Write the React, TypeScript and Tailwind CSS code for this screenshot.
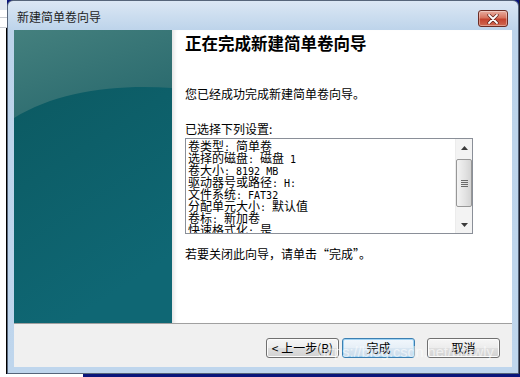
import React from "react";

const settings = [
  "卷类型: 简单卷",
  "选择的磁盘: 磁盘 1",
  "卷大小: 8192 MB",
  "驱动器号或路径: H:",
  "文件系统: FAT32",
  "分配单元大小: 默认值",
  "卷标: 新加卷",
  "快速格式化: 是",
];

const btn =
  "h-[20px] w-[73px] rounded-[3px] border border-[#707070] bg-[linear-gradient(to_bottom,#f6f6f6_0%,#ececec_50%,#dfdfdf_51%,#d2d2d2_100%)] shadow-[inset_0_0_0_1px_#fcfcfc] text-[12px] leading-[18px] text-black";

// half-width latin like SimSun: split ascii runs into a mono span
const SettingLine = ({ text }: { text: string }) => (
  <div className="flex items-baseline h-[12px] leading-[12px] whitespace-nowrap">
    {text.split(/([\x20-\x7e]+)/).map((part, i) =>
      /^[\x20-\x7e]+$/.test(part) ? (
        <span key={i} className="font-['DejaVu_Sans_Mono',monospace] text-[10px] leading-[12px] whitespace-pre">
          {part}
        </span>
      ) : (
        <span key={i} className="leading-[12px]">{part}</span>
      )
    )}
  </div>
);

const Backdrop = () => (
  <div className="w-[7px] flex flex-col bg-white">
    <div className="h-[10px] bg-[#dfe6ef]" />
    <div className="h-[8px] border-b border-[#c8ccd2]" />
    <div className="h-[10px] border-b border-[#c8ccd2]" />
    <div className="flex-1 border-r border-black" />
  </div>
);

const TealPanel = () => (
  <svg width="158" height="293" viewBox="0 0 158 293" className="block shrink-0">
    <defs>
      <linearGradient id="dark" x1="0" y1="0" x2="0.35" y2="1">
        <stop offset="0" stopColor="#0b575e" />
        <stop offset="1" stopColor="#0f6774" />
      </linearGradient>
      <linearGradient id="light" x1="0" y1="0" x2="0.6" y2="1">
        <stop offset="0" stopColor="#44807e" />
        <stop offset="1" stopColor="#2a6a6e" />
      </linearGradient>
    </defs>
    <rect width="158" height="293" fill="url(#dark)" />
    <path d="M0 0H158V58C100 54 42 62 0 88Z" fill="url(#light)" />
  </svg>
);

const Scrollbar = () => (
  <div className="w-[17px] h-full flex flex-col items-center bg-[#f3f3f3] border-l border-[#ececec]">
    <div className="h-[17px] flex items-center justify-center">
      <svg width="7" height="4" viewBox="0 0 7 4">
        <path d="M0 4L3.5 0L7 4Z" fill="#3a3a3a" />
      </svg>
    </div>
    <div className="mt-[3px] h-[48px] w-[16px] rounded-[2px] border border-[#979797] bg-[linear-gradient(to_right,#f3f3f3,#e2e2e2_60%,#d4d4d4)] flex flex-col items-center justify-center gap-[1px]">
      <div className="h-[1px] w-[7px] bg-[#6a6a6a]" />
      <div className="h-[1px] w-[7px] bg-[#6a6a6a]" />
      <div className="h-[1px] w-[7px] bg-[#6a6a6a]" />
      <div className="h-[1px] w-[7px] bg-[#6a6a6a]" />
    </div>
    <div className="flex-1" />
    <div className="h-[17px] flex items-center justify-center">
      <svg width="7" height="4" viewBox="0 0 7 4">
        <path d="M0 0L3.5 4L7 0Z" fill="#3a3a3a" />
      </svg>
    </div>
  </div>
);

const Window = () => (
  <div className="w-[512px] flex flex-col rounded-t-[6px] border border-[#56657a] bg-[linear-gradient(to_bottom,#dbe7f4_0px,#bcd3ea_30px,#bfd6ed_100%)]">
    {/* title bar */}
    <div className="h-[29px] flex items-center pl-[9px] pr-[10px]">
      <span className="text-[12px] text-[#1e1e1e] pt-[2px]">新建简单卷向导</span>
      <div className="flex-1" />
      <div className="mt-[6px] h-[17px] w-[30px] rounded-[3px] border border-[#6b2c24] bg-[linear-gradient(to_bottom,#e8ada0_0%,#d7745f_45%,#c4432f_55%,#d06a52_100%)] shadow-[inset_0_0_0_1px_rgba(255,255,255,0.35)] flex items-center justify-center">
        <svg width="12" height="10" viewBox="0 0 12 10">
          <path d="M2 1L10 9M10 1L2 9" stroke="#5a1f18" strokeWidth="3.2" strokeLinecap="round" />
          <path d="M2 1L10 9M10 1L2 9" stroke="#ffffff" strokeWidth="1.8" strokeLinecap="round" />
        </svg>
      </div>
    </div>

    {/* client area */}
    <div className="mx-[6px] flex flex-col bg-[#f0f0f0]">
      <div className="h-[293px] flex">
        <TealPanel />
        <div className="flex-1 bg-white shadow-[inset_5px_0_4px_-3px_rgba(0,0,0,0.12)] pl-[13px] flex flex-col">
          <h1 className="mt-[3px] text-[16.5px] leading-[20px] font-bold text-black">正在完成新建简单卷向导</h1>
          <p className="mt-[34px] leading-[14px]">您已经成功完成新建简单卷向导。</p>
          <p className="mt-[21px] leading-[14px]">已选择下列设置:</p>
          <div className="mt-[2px] w-[288px] h-[96px] border border-[#8a8f98] flex bg-white overflow-hidden">
            <div className="flex-1 pl-[2px] pt-[1px] overflow-hidden">
              {settings.map((s) => (
                <SettingLine key={s} text={s} />
              ))}
            </div>
            <Scrollbar />
          </div>
          <p className="mt-[13px] leading-[14px]">若要关闭此向导，请单击“完成”。</p>
        </div>
      </div>
      <div className="h-[1px] bg-[#a0a0a0]" />
      <div className="h-[43px] flex justify-end items-start pt-[14px] pr-[12px]">
        <button className={btn}>&lt; 上一步(B)</button>
        <button className="ml-[3px] h-[20px] w-[73px] rounded-[3px] border border-[#3c7fb1] bg-[linear-gradient(to_bottom,#f1f7fc_0%,#e6eff7_50%,#d8e6f2_51%,#cbdceb_100%)] shadow-[inset_0_0_0_1px_#9fd3f4] text-[12px] leading-[18px] text-black">
          完成
        </button>
        <button className={`ml-[12px] ${btn}`}>取消</button>
      </div>
    </div>
    <div className="h-[6px]" />
  </div>
);

export default function App() {
  return (
    <div className="relative w-[520px] h-[377px] overflow-hidden flex flex-col bg-[#0a157a] font-['Noto_Sans_CJK_SC',sans-serif] text-[12px] text-black">
      <div className="flex h-[374px]">
        <Backdrop />
        <Window />
        <div className="w-[1px] bg-[#1c2030]" />
      </div>
      <div className="flex h-[3px]">
        <div className="w-[83px] bg-white" />
        <div className="flex-1 bg-[#0a157a]" />
      </div>
      {/* watermark */}
      <div className="absolute left-[318px] top-[343px] text-[14.5px] leading-[18px] font-['Liberation_Sans',sans-serif] text-white/60 pointer-events-none">
        https://blog.csdn.net/brawly
      </div>
    </div>
  );
}
